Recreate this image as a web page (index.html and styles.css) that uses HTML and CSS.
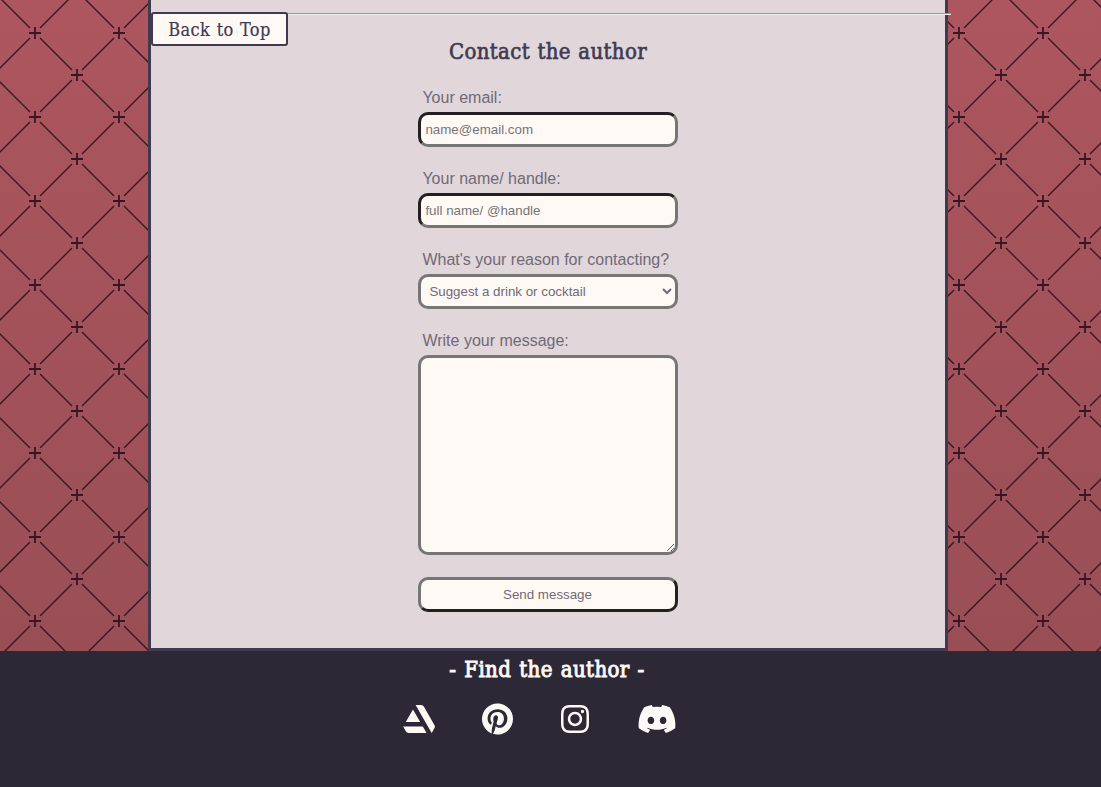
FILE: index.html
```html
<!DOCTYPE html>
<html lang="en">
<head>
<meta charset="utf-8">
<title>Contact the author</title>
<link rel="stylesheet" href="styles.css">
</head>
<body>
<div class="backdrop">
  <main class="page">
    <a class="back-to-top" href="#">Back to Top</a>
    <hr class="divider">
    <h2 class="title">Contact the author</h2>
    <form class="form">
      <label class="label" for="email">Your email:</label>
      <input class="field" id="email" type="email" placeholder="name@email.com">
      <label class="label" for="name">Your name/ handle:</label>
      <input class="field" id="name" type="text" placeholder="full name/ @handle">
      <label class="label" for="reason">What's your reason for contacting?</label>
      <select class="field select" id="reason"><option>Suggest a drink or cocktail</option></select>
      <label class="label" for="message">Write your message:</label>
      <textarea class="field message" id="message"></textarea>
      <button class="field send" type="button">Send message</button>
    </form>
  </main>
</div>
<footer class="footer">
  <h2 class="footer-title">- Find the author -</h2>
  <nav class="social">
    <a href="#" aria-label="ArtStation"><svg width="32" height="32" viewBox="0 0 512 512"><path d="M2 377.400l43 74.300A51.350 51.350 0 0 0 90.900 480h285.400l-59.200-102.600zM501.800 350L335.600 59.300A51.380 51.380 0 0 0 290.200 32h-88.400l257.300 447.600 40.700-70.500c1.900-3.200 21-29.700 2-59.100zM275 304.500l-115.500-200L44 304.500z"/></svg></a>
    <a href="#" aria-label="Pinterest"><svg width="31" height="32" viewBox="0 0 496 512"><path d="M496 256c0 137-111 248-248 248-25.600 0-50.200-3.900-73.400-11.100 10.100-16.500 25.200-43.500 30.800-65 3-11.600 15.400-59 15.400-59 8.100 15.400 31.700 28.500 56.800 28.500 74.800 0 128.700-68.800 128.700-154.300 0-81.900-66.900-143.200-152.900-143.200-107 0-163.900 71.800-163.900 150.100 0 36.400 19.400 81.700 50.300 96.100 4.700 2.200 7.200 1.200 8.300-3.300.800-3.400 5-20.300 6.900-28.100.6-2.500.3-4.700-1.700-7.100-10.100-12.500-18.300-35.300-18.300-56.600 0-54.700 41.400-107.600 112-107.600 60.900 0 103.600 41.500 103.600 100.900 0 67.100-33.900 113.600-78 113.600-24.300 0-42.600-20.100-36.700-44.800 7-29.500 20.500-61.300 20.500-82.600 0-19-10.200-34.900-31.400-34.900-24.900 0-44.900 25.700-44.900 60.200 0 22 7.400 36.800 7.400 36.800s-24.500 103.800-29 123.200c-5 21.400-3 51.600-.9 71.200C65.400 450.900 0 361.100 0 256 0 119 111 8 248 8s248 111 248 248z"/></svg></a>
    <a href="#" aria-label="Instagram"><svg width="28" height="32" viewBox="0 0 448 512"><path d="M224.100 141c-63.600 0-114.900 51.300-114.900 114.900s51.300 114.900 114.900 114.900S339 319.500 339 255.900 287.700 141 224.100 141zm0 189.600c-41.100 0-74.700-33.500-74.700-74.700s33.500-74.700 74.700-74.700 74.700 33.500 74.700 74.700-33.600 74.700-74.700 74.700zm146.400-194.300c0 14.900-12 26.800-26.800 26.800-14.900 0-26.800-12-26.800-26.800s12-26.800 26.800-26.800 26.800 12 26.800 26.800zm76.100 27.200c-1.700-35.900-9.900-67.700-36.200-93.900-26.200-26.200-58-34.400-93.900-36.200-37-2.100-147.900-2.100-184.900 0-35.800 1.700-67.600 9.900-93.900 36.100s-34.400 58-36.200 93.900c-2.100 37-2.100 147.900 0 184.900 1.700 35.900 9.900 67.700 36.200 93.900s58 34.400 93.900 36.200c37 2.100 147.900 2.100 184.900 0 35.900-1.700 67.700-9.900 93.900-36.200 26.200-26.200 34.400-58 36.200-93.900 2.100-37 2.100-147.800 0-184.800zM398.800 388c-7.800 19.600-22.900 34.700-42.600 42.600-29.500 11.700-99.500 9-132.100 9s-102.700 2.600-132.100-9c-19.600-7.800-34.700-22.900-42.600-42.600-11.700-29.500-9-99.500-9-132.100s-2.600-102.700 9-132.100c7.800-19.600 22.900-34.700 42.600-42.600 29.500-11.700 99.500-9 132.100-9s102.700-2.600 132.100 9c19.600 7.800 34.700 22.900 42.600 42.600 11.700 29.500 9 99.500 9 132.100s2.700 102.700-9 132.100z"/></svg></a>
    <a href="#" aria-label="Discord"><svg width="40" height="32" viewBox="0 0 640 512"><path d="M524.531,69.836a1.500,1.500,0,0,0-.764-.7A485.065,485.065,0,0,0,404.081,32.030a1.816,1.816,0,0,0-1.923.91,337.461,337.461,0,0,0-14.900,30.600,447.848,447.848,0,0,0-134.426,0,309.541,309.541,0,0,0-15.135-30.600,1.890,1.890,0,0,0-1.924-.91A483.689,483.689,0,0,0,116.085,69.137a1.712,1.712,0,0,0-.788.676C39.068,183.651,18.186,294.690,28.430,404.354a2.016,2.016,0,0,0,.765,1.375A487.666,487.666,0,0,0,176.020,479.918a1.900,1.900,0,0,0,2.063-.676A348.200,348.200,0,0,0,208.120,430.400a1.860,1.860,0,0,0-1.019-2.588,321.173,321.173,0,0,1-45.868-21.853,1.885,1.885,0,0,1-.185-3.126c3.082-2.309,6.166-4.711,9.109-7.137a1.819,1.819,0,0,1,1.900-.256c96.229,43.917,200.410,43.917,295.500,0a1.812,1.812,0,0,1,1.924.233c2.944,2.426,6.027,4.851,9.132,7.160a1.884,1.884,0,0,1-.162,3.126,301.407,301.407,0,0,1-45.890,21.830,1.875,1.875,0,0,0-1,2.611,391.055,391.055,0,0,0,30.014,48.815,1.864,1.864,0,0,0,2.063.7A486.048,486.048,0,0,0,610.700,405.729a1.882,1.882,0,0,0,.765-1.352C623.729,277.594,590.933,167.465,524.531,69.836ZM222.491,337.580c-28.972,0-52.844-26.587-52.844-59.239S193.056,219.100,222.491,219.100c29.665,0,53.306,26.820,52.843,59.239C275.334,310.993,251.924,337.580,222.491,337.580Zm195.380,0c-28.971,0-52.843-26.587-52.843-59.239S388.437,219.100,417.871,219.100c29.667,0,53.307,26.820,52.844,59.239C470.715,310.993,447.538,337.580,417.871,337.580Z"/></svg></a>
  </nav>
</footer>
</body>
</html>
```
FILE: styles.css
```css
* { box-sizing: border-box; }

body {
  margin: 0;
  height: 787px;
  overflow: hidden;
  background: #2d2836;
  font-family: "Liberation Sans", Arial, sans-serif;
}

/* Quilted diamonds: one cross in the tile centre, one shared by its corners */
.backdrop {
  height: 651px;
  background:
    url("data:image/svg+xml,%3Csvg xmlns='http://www.w3.org/2000/svg' width='84' height='84' fill='none' stroke='%23351722'%3E%3Cpath stroke-width='1.4' d='M5 5L37 37M47 47L79 79M79 5L47 37M37 47L5 79'/%3E%3Cpath stroke-width='1.8' d='M36 42H48M42 36V48M-6 0H6M0 -6V6M78 0H90M84 -6V6M-6 84H6M0 78V90M78 84H90M84 78V90'/%3E%3C/svg%3E") 35px 33px / 84px 84px,
    linear-gradient(#ad565f, #994e56);
}

.page {
  position: relative;
  width: 800px;
  height: 651px;
  margin-left: 148px;
  padding-top: 13px;
  border: solid #403a4e;
  border-width: 0 3px 3px;
  background: #e1d6da;
}

.back-to-top {
  position: absolute;
  top: 12px;
  left: 0;
  width: 137px;
  height: 34px;
  border: 2px solid #403a4e;
  border-radius: 3px;
  background: #fff9f6;
  color: #403a4e;
  font: 18px/31px "DejaVu Serif", serif;
  font-stretch: condensed;
  letter-spacing: 0.35px;
  word-spacing: 1px;
  text-align: center;
  text-decoration: none;
  white-space: nowrap;
  -webkit-text-stroke: 0.2px currentColor;
}

.divider {
  width: 800px;
  height: 2px;
  margin: 0;
  border: solid;
  border-width: 1px 0;
  border-color: #9a9a9a #eee #eee;
}

.title,
.footer-title {
  margin: 0;
  color: #403a4e;
  font: 22px/28px "DejaVu Serif", serif;
  font-stretch: condensed;
  letter-spacing: 0.35px;
  word-spacing: 0.8px;
  text-align: center;
  white-space: nowrap;
  -webkit-text-stroke: 0.6px currentColor;
}

.title { padding-top: 23px; }

.form {
  display: flex;
  flex-direction: column;
  width: 260px;
  margin: 20px 0 0 267px;
}

.label {
  height: 26px;
  padding: 3px 0 0 4.4px;
  color: #706a78;
  font-size: 16px;
  line-height: 18px;
  white-space: nowrap;
}

.field {
  width: 260px;
  height: 35px;
  margin: 0 0 20px;
  padding: 1px 4.4px;
  border: 3px solid;
  border-color: #212121 #767676 #767676 #212121;
  border-radius: 10px;
  background: #fff9f6;
  color: #706a78;
  font: 13.333px "Liberation Sans", Arial, sans-serif;
}

.field::placeholder { color: #757575; }

.select {
  padding: 0 0 0 4.4px;
  border-color: #767676;
}

.message {
  height: 200px;
  margin-bottom: 22px;
  border-color: #767676;
  resize: vertical;
}

.send {
  margin: 0;
  padding-right: 5.4px;
  border-color: #767676 #212121 #212121 #767676;
}

.footer {
  height: 136px;
  padding-top: 5px;
}

.footer-title {
  width: 1094px;
  color: #fff9f6;
  letter-spacing: 0.4px;
  word-spacing: 1.2px;
  -webkit-text-stroke-width: 0.9px;
}

.social {
  display: flex;
  gap: 47.600px;
  margin: 19px 0 0 402.800px;
}

.social a { display: block; height: 32px; }

.social svg {
  display: block;
  fill: #fff9f6;
}
```
